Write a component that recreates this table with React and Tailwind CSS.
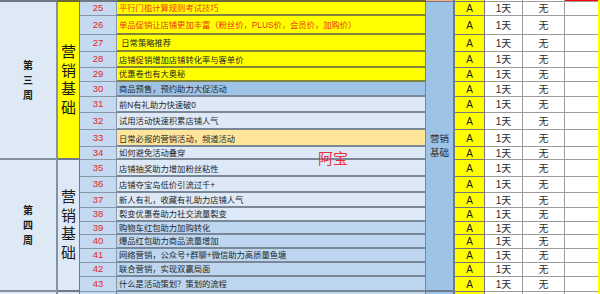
const rows = [
  { n: 25, text: "平行门槛计算规则考试技巧", bg: "bg-[#ffff00]", line: "border-[#85853a]", color: "text-[#f2401c]", end: false },
  { n: 26, text: "单品促销让店铺更加丰富（粉丝价，PLUS价，会员价，加购价）", bg: "bg-[#ffff00]", line: "border-[#85853a]", color: "text-[#e8331e]", end: false },
  { n: 27, text: "\u00a0日常策略推荐", bg: "bg-[#ffff00]", line: "border-[#85853a]", color: "text-[#262626]", end: false },
  { n: 28, text: "店铺促销增加店铺转化率与客单价", bg: "bg-[#ffff00]", line: "border-[#85853a]", color: "text-[#262626]", end: true },
  { n: 29, text: "优惠卷也有大奥秘", bg: "bg-[#ffff00]", line: "border-[#85853a]", color: "text-[#262626]", end: false },
  { n: 30, text: "商品预售，预约助力大促活动", bg: "bg-[#9fc3e7]", line: "border-[#7a8797]", color: "text-[#262626]", end: false },
  { n: 31, text: "前N有礼助力快速破0", bg: "bg-[#dde9f6]", line: "border-[#7a8797]", color: "text-[#262626]", end: true },
  { n: 32, text: "试用活动快速积累店铺人气", bg: "bg-[#dde9f6]", line: "border-[#7a8797]", color: "text-[#262626]", end: false },
  { n: 33, text: "日常必报的营销活动，频道活动", bg: "bg-[#ffe59a]", line: "border-[#7a8797]", color: "text-[#262626]", end: true },
  { n: 34, text: "如何避免活动叠穿", bg: "bg-[#dde9f6]", line: "border-[#7a8797]", color: "text-[#262626]", end: false },
  { n: 35, text: "店铺抽奖助力增加粉丝粘性", bg: "bg-[#dde9f6]", line: "border-[#7a8797]", color: "text-[#262626]", end: true },
  { n: 36, text: "店铺夺宝岛低价引流过千+", bg: "bg-[#dde9f6]", line: "border-[#7a8797]", color: "text-[#262626]", end: true },
  { n: 37, text: "新人有礼，收藏有礼助力店铺人气", bg: "bg-[#dde9f6]", line: "border-[#7a8797]", color: "text-[#262626]", end: true },
  { n: 38, text: "裂变优惠卷助力社交流量裂变", bg: "bg-[#dde9f6]", line: "border-[#7a8797]", color: "text-[#262626]", end: false },
  { n: 39, text: "购物车红包助力加购转化", bg: "bg-[#bed6ef]", line: "border-[#7a8797]", color: "text-[#262626]", end: false },
  { n: 40, text: "爆品红包助力商品流量增加", bg: "bg-[#bed6ef]", line: "border-[#7a8797]", color: "text-[#262626]", end: false },
  { n: 41, text: "网络营销，公众号+群聊+微信助力高质量鱼塘", bg: "bg-[#bed6ef]", line: "border-[#7a8797]", color: "text-[#262626]", end: false },
  { n: 42, text: "联合营销，实现双赢局面", bg: "bg-[#bed6ef]", line: "border-[#7a8797]", color: "text-[#262626]", end: false },
  { n: 43, text: "什么是活动策划？策划的流程", bg: "bg-[#bed6ef]", line: "border-[#7a8797]", color: "text-[#262626]", end: false },
];

const font = "font-['Liberation_Sans','Noto_Sans_CJK_SC',sans-serif]";

const Stack = ({ chars, className }) => (
  <div className={`flex flex-col items-center ${className}`}>
    {chars.split("").map((c, i) => (
      <span key={i}>{c}</span>
    ))}
  </div>
);

const WeekCell = ({ label, span }) => (
  <div className={`${span} bg-[#dde9f5] border-r-2 border-b-2 border-[#8391a1] flex items-center justify-center`}>
    <Stack chars={label} className="text-[10px] leading-[15px] font-bold text-[#1a1a1a]" />
  </div>
);

const App = () => {
  const cells = [];

  // partial row at the top
  cells.push(
    <div key="t1" className="bg-[#dde9f5] border-b-2 border-r-2 border-[#6b7785]" />,
    <div key="t2" className="bg-[#ffff00] border-b-2 border-r border-[#6b6b30]" />,
    <div key="t3" className="bg-[#c5d9f1] border-b-2 border-r border-[#6e7a88]" />,
    <div key="t4" className="bg-[#ffff00] border-b-2 border-r border-[#6b6b30]" />,
    <div key="t5" className="bg-[#f4b183] border-b border-r-2 border-[#6e7a88]" />,
    <div key="t6" className="bg-[#ffff00] border-b border-r border-[#777]" />,
    <div key="t7" className="bg-white border-b border-r border-[#9c9c9c]" />,
    <div key="t8" className="bg-white border-b border-r border-[#9c9c9c]" />,
    <div key="t9" className="bg-[#ff0000] border-b border-[#9c9c9c]" />,
    <div key="t10" className="bg-[#ffff00]" />
  );

  rows.forEach((r) => {
    if (r.n === 25) {
      cells.push(
        <WeekCell key="w3" label="第三周" span="row-span-10" />,
        <div key="b3" className="row-span-10 bg-[#ffff00] border-r border-b-2 border-[#6e7a88] flex items-center justify-center">
          <Stack chars="营销基础" className="text-[15px] leading-[18.5px] text-[#1a1a1a]" />
        </div>
      );
    }
    if (r.n === 35) {
      cells.push(
        <WeekCell key="w4" label="第四周" span="row-span-9" />,
        <div key="b4" className="row-span-9 bg-[#dde9f6] border-r border-b-2 border-[#6e7a88] flex items-center justify-center">
          <Stack chars="营销基础" className="text-[15px] leading-[18.5px] text-[#1a1a1a]" />
        </div>
      );
    }
    cells.push(
      <div key={`n${r.n}`} className="bg-[#c5d9f1] border-b border-r border-[#8797aa] flex items-center justify-center text-[9.5px] text-[#e3262b]">
        {r.n}
      </div>,
      <div
        key={`x${r.n}`}
        className={`${r.bg} ${r.line} ${r.color} border-b-2 border-r flex ${r.end ? "items-end pb-[1px]" : "items-center"} pl-[2px] text-[8.3px] leading-[10px] whitespace-nowrap overflow-hidden`}
      >
        {r.text}
      </div>
    );
    if (r.n === 25) {
      cells.push(
        <div key="blue" className="row-span-19 bg-[#9dc3e6] border-r-2 border-b-2 border-[#6e7a88] flex items-center justify-center">
          <div className="flex flex-col items-center text-[9.5px] leading-[14px] text-[#2b2b2b]">
            <span>营销</span>
            <span>基础</span>
          </div>
        </div>
      );
    }
    cells.push(
      <div key={`a${r.n}`} className="bg-[#ffff00] border-b border-r border-[#777] flex items-center justify-center text-[10px] text-[#1a1a1a]">
        A
      </div>,
      <div key={`d${r.n}`} className="bg-white border-b border-r border-[#9c9c9c] flex items-center justify-center text-[10px] text-[#2b2b2b]">
        1天
      </div>,
      <div key={`m${r.n}`} className="bg-white border-b border-r border-[#9c9c9c] flex items-center justify-center text-[10px] text-[#2b2b2b]">
        无
      </div>,
      <div key={`e${r.n}`} className="bg-white border-b border-[#9c9c9c]" />,
      <div key={`y${r.n}`} className="bg-[#ffff00]" />
    );
  });

  // partial row at the bottom
  cells.push(
    <div key="f1" className="bg-[#dde9f5] border-r-2 border-[#8391a1]" />,
    <div key="f2" className="bg-[#dde9f6] border-r border-[#6e7a88]" />,
    <div key="f3" className="bg-[#c5d9f1] border-r border-[#6e7a88]" />,
    <div key="f4" className="bg-[#bed6ef] border-r border-[#6e7a88]" />,
    <div key="f5" className="bg-[#9dc3e6] border-r-2 border-[#6e7a88]" />,
    <div key="f6" className="bg-[#ffff00] border-r border-[#777]" />,
    <div key="f7" className="bg-white border-r border-[#9c9c9c]" />,
    <div key="f8" className="bg-white border-r border-[#9c9c9c]" />,
    <div key="f9" className="bg-white" />,
    <div key="f10" className="bg-[#ffff00]" />
  );

  return (
    <div className={`relative w-[600px] h-[294px] overflow-hidden bg-white ${font}`}>
      <div className="grid grid-cols-[58px_22px_37px_309px_29px_30px_38px_42px_33px_2px] grid-rows-[2px_14px_19px_17px_16px_14px_15px_16px_17px_17px_13px_17px_16px_15px_14px_13px_14px_14px_14px_15px_2px]">
        {cells}
      </div>
      <div className="absolute left-[318px] top-[151px] text-[15px] leading-[16px] text-[#e8313a]">
        阿宝
      </div>
    </div>
  );
};

export default App;
